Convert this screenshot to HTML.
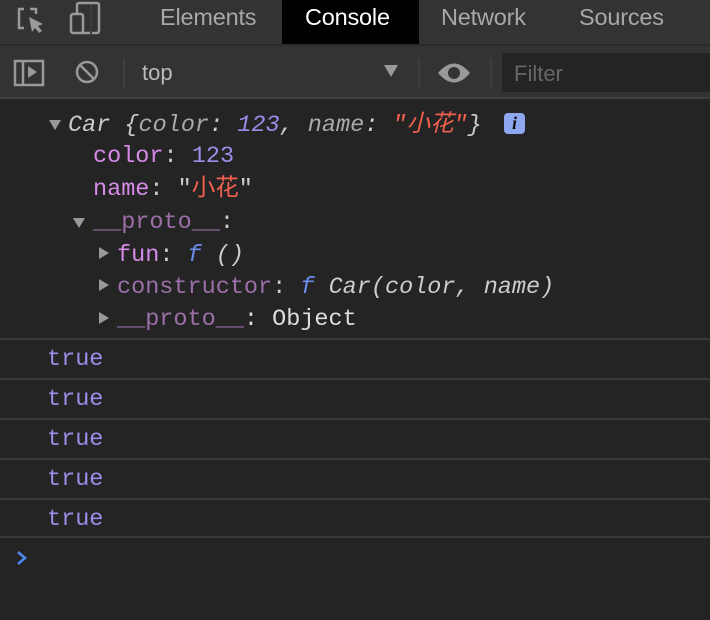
<!DOCTYPE html>
<html><head><meta charset="utf-8"><style>
body{margin:0;width:710px;height:620px;background:#242424;overflow:hidden;position:relative;font-family:"Liberation Sans",sans-serif}
.abs{position:absolute}
.m{font-family:"Liberation Mono","Noto Sans CJK SC",monospace;font-size:23.5px;white-space:pre;position:absolute;line-height:32px}
.sep{position:absolute;left:0;width:710px;height:2px;background:#3a3a3a}
.tr{color:#9a8ee8}
.tab{position:absolute;top:4px;font-size:23.5px;letter-spacing:-0.2px}
</style></head><body>
<div class="abs" style="left:0;top:0;width:710px;height:44px;background:#333"></div>
<div class="abs" style="left:0;top:44px;width:710px;height:2px;background:#2a2a2a"></div>
<div class="abs" style="left:0;top:46px;width:710px;height:52px;background:#333"></div>
<div class="abs" style="left:0;top:97px;width:710px;height:2px;background:#3e3e3e"></div>
<div class="abs" style="left:282px;top:0;width:137px;height:44px;background:#000"></div>
<div class="tab" style="left:160px;color:#a8a8a8">Elements</div>
<div class="tab" style="left:305px;color:#fff">Console</div>
<div class="tab" style="left:441px;color:#a8a8a8">Network</div>
<div class="tab" style="left:579px;color:#a8a8a8">Sources</div>
<svg class="abs" style="left:0;top:0" width="140" height="100">
<g fill="none" stroke="#999" stroke-width="2.5">
<path d="M24 9h-5v19h5M36 14V9h-6"/>
<rect x="77" y="3" width="22" height="30" rx="2"/>
<rect x="71" y="14" width="12" height="19" rx="2" fill="#333"/>
<rect x="15" y="61" width="28" height="24"/><path d="M23 61v24"/>
<circle cx="87" cy="72" r="10"/><path d="M80 65l14 14"/>
</g>
<path d="M29 17l14 7-5 2 4 5-3 2-4-5-3 4z" fill="#999"/>
<path d="M28 66l9 6-9 6z" fill="#999"/>
<rect x="123" y="58" width="2" height="30" fill="#3e3e3e"/>
</svg>
<div class="abs" style="left:90px;top:5px;width:2px;height:30px;background:#3e3e3e"></div>
<div class="abs" style="left:142px;top:60px;font-size:22px;color:#bbb">top</div>
<svg class="abs" style="left:383px;top:64px" width="16" height="14"><path d="M1 1h14l-7 12z" fill="#999"/></svg>
<div class="abs" style="left:418px;top:58px;width:2px;height:30px;background:#3e3e3e"></div>
<svg class="abs" style="left:436px;top:60px" width="36" height="26"><path d="M2 13Q18-6 34 13Q18 32 2 13z" fill="#999"/><circle cx="18" cy="13" r="6" fill="#333"/></svg>
<div class="abs" style="left:490px;top:58px;width:2px;height:30px;background:#3e3e3e"></div>
<div class="abs" style="left:502px;top:53px;width:208px;height:39px;background:#242424"></div>
<div class="abs" style="left:514px;top:61px;font-size:22px;color:#666">Filter</div>

<svg class="abs" style="left:48px;top:119px" width="14" height="12"><path d="M1 1h12l-6 10z" fill="#999"/></svg>
<div class="m" style="left:68px;top:110px;color:#ccc;font-style:italic">Car {<span style="color:#aaa">color</span>: <span class="tr">123</span>, <span style="color:#aaa">name</span>: <span style="color:#f2604e">"小花"</span>}</div>
<div class="abs" style="left:504px;top:113px;width:21px;height:21px;background:#8fa6f0;border-radius:4px;color:#111;font:italic bold 18px 'Liberation Serif',serif;text-align:center;line-height:21px">i</div>
<div class="m" style="left:93px;top:141px;color:#ccc"><span style="color:#d68be8">color</span>: <span class="tr">123</span></div>
<div class="m" style="left:93px;top:174px;color:#ccc"><span style="color:#d68be8">name</span>: "<span style="color:#f2604e">小花</span>"</div>
<svg class="abs" style="left:72px;top:217px" width="14" height="12"><path d="M1 1h12l-6 10z" fill="#999"/></svg>
<div class="m" style="left:93px;top:207px;color:#ccc"><span style="color:#9c6fa8">__proto__</span>:</div>
<svg class="abs" style="left:98px;top:246px" width="12" height="14"><path d="M1 1v12l10-6z" fill="#999"/></svg>
<div class="m" style="left:117px;top:240px;color:#ccc"><span style="color:#d68be8">fun</span>: <i style="color:#6d8ef0">f</i> <i>()</i></div>
<svg class="abs" style="left:98px;top:278px" width="12" height="14"><path d="M1 1v12l10-6z" fill="#999"/></svg>
<div class="m" style="left:117px;top:272px;color:#ccc"><span style="color:#9c6fa8">constructor</span>: <i style="color:#6d8ef0">f</i> <i>Car(color, name)</i></div>
<svg class="abs" style="left:98px;top:311px" width="12" height="14"><path d="M1 1v12l10-6z" fill="#999"/></svg>
<div class="m" style="left:117px;top:304px;color:#ddd"><span style="color:#9c6fa8">__proto__</span>: Object</div>

<div class="sep" style="top:338px"></div>
<div class="m tr" style="left:47px;top:344px">true</div>
<div class="sep" style="top:378px"></div>
<div class="m tr" style="left:47px;top:384px">true</div>
<div class="sep" style="top:418px"></div>
<div class="m tr" style="left:47px;top:424px">true</div>
<div class="sep" style="top:458px"></div>
<div class="m tr" style="left:47px;top:464px">true</div>
<div class="sep" style="top:498px"></div>
<div class="m tr" style="left:47px;top:504px">true</div>
<div class="sep" style="top:536px"></div>
<svg class="abs" style="left:16px;top:551px" width="12" height="14"><path d="M2 1l7 6-7 6" fill="none" stroke="#4a8af0" stroke-width="2.5"/></svg>
</body></html>
